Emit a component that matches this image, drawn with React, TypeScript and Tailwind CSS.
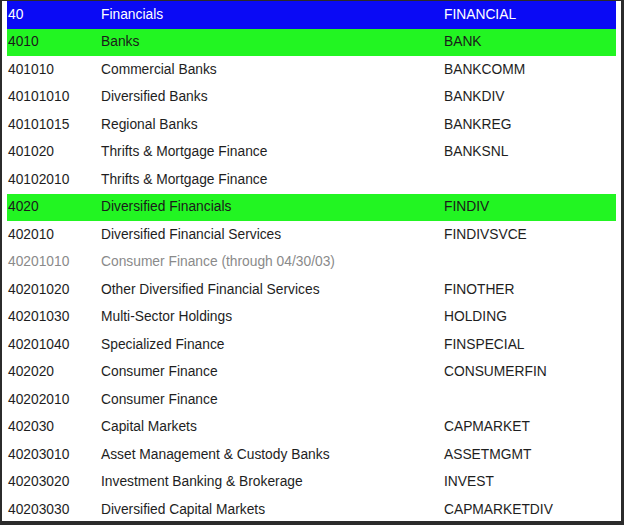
const rows: { code: string; name: string; key: string; tone?: "blue" | "green" | "muted" }[] = [
  { code: "40", name: "Financials", key: "FINANCIAL", tone: "blue" },
  { code: "4010", name: "Banks", key: "BANK", tone: "green" },
  { code: "401010", name: "Commercial Banks", key: "BANKCOMM" },
  { code: "40101010", name: "Diversified Banks", key: "BANKDIV" },
  { code: "40101015", name: "Regional Banks", key: "BANKREG" },
  { code: "401020", name: "Thrifts & Mortgage Finance", key: "BANKSNL" },
  { code: "40102010", name: "Thrifts & Mortgage Finance", key: "" },
  { code: "4020", name: "Diversified Financials", key: "FINDIV", tone: "green" },
  { code: "402010", name: "Diversified Financial Services", key: "FINDIVSVCE" },
  { code: "40201010", name: "Consumer Finance (through 04/30/03)", key: "", tone: "muted" },
  { code: "40201020", name: "Other Diversified Financial Services", key: "FINOTHER" },
  { code: "40201030", name: "Multi-Sector Holdings", key: "HOLDING" },
  { code: "40201040", name: "Specialized Finance", key: "FINSPECIAL" },
  { code: "402020", name: "Consumer Finance", key: "CONSUMERFIN" },
  { code: "40202010", name: "Consumer Finance", key: "" },
  { code: "402030", name: "Capital Markets", key: "CAPMARKET" },
  { code: "40203010", name: "Asset Management & Custody Banks", key: "ASSETMGMT" },
  { code: "40203020", name: "Investment Banking & Brokerage", key: "INVEST" },
  { code: "40203030", name: "Diversified Capital Markets", key: "CAPMARKETDIV" },
];

const toneClass = {
  blue: "bg-[#0a0af5] text-white",
  green: "bg-[#22f522] text-[#1a1a1a]",
  muted: "bg-white text-[#8a8a8a]",
  plain: "bg-white text-[#1e1e1e]",
};

export default function App() {
  return (
    <div
      className="box-border h-[525px] w-[624px] overflow-hidden border-b-4 border-l-2 border-r-[3px] border-t border-[#2b2b2b] bg-white pl-[5px] pr-[5px]"
      style={{ fontFamily: '"Liberation Sans", Arial, sans-serif' }}
    >
      {rows.map((r) => (
        <div
          key={r.code}
          className={`grid h-[27.5px] shrink-0 grid-cols-[94px_343px_1fr] items-center text-[13.8px] leading-none ${toneClass[r.tone ?? "plain"]}`}
        >
          <span className="pl-[1px]">{r.code}</span>
          <span>{r.name}</span>
          <span>{r.key}</span>
        </div>
      ))}
    </div>
  );
}
